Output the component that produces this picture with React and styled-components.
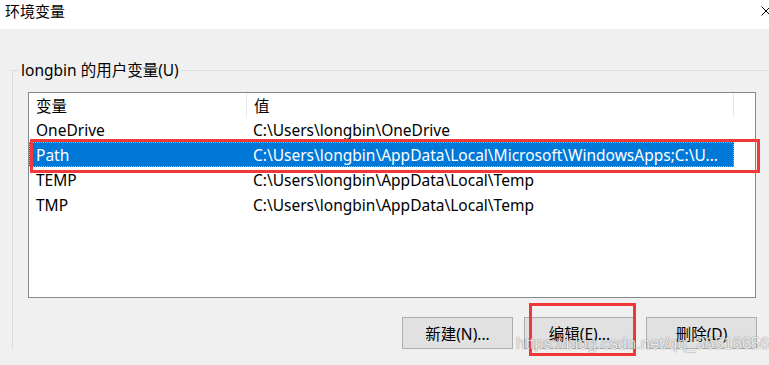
import React from 'react';
import styled, { createGlobalStyle } from 'styled-components';

const GlobalStyle = createGlobalStyle`
  html, body {
    margin: 0;
    padding: 0;
    background: #f0f0f0;
  }
  body {
    font-family: "Noto Sans", "Noto Sans CJK SC", sans-serif;
    color: #000;
  }
`;

const Window = styled.div`
  position: relative;
  width: 769px;
  height: 365px;
  overflow: hidden;
  background: #f0f0f0;
`;

const TitleBar = styled.div`
  height: 29px;
  background: #fff;
  display: flex;
  align-items: flex-start;
  justify-content: space-between;
  padding-left: 5px;
  box-sizing: border-box;
`;

const Title = styled.div`
  font-size: 15px;
  line-height: 20px;
  margin-top: 1px;
`;

const Close = styled.svg`
  width: 10px;
  height: 10px;
  margin-top: 6px;
  margin-right: -2px;
`;

const Group = styled.fieldset`
  margin: 31px 0 0 12px;
  width: 780px;
  padding: 12px 0 0 15px;
  border: 1px solid #dcdcdc;
  border-bottom: none;
  box-sizing: border-box;
  min-width: 0;
`;

const Legend = styled.legend`
  font-size: 15.5px;
  line-height: 20px;
  padding: 0 2px;
  margin-left: -9px;
`;

const List = styled.div`
  width: 728px;
  height: 206px;
  border: 1px solid #828790;
  background: #fff;
  box-sizing: border-box;
`;

const Row = styled.div`
  display: flex;
  height: ${p => (p.$header ? 24 : 25)}px;
  align-items: center;
  font-size: 15.5px;
  width: ${p => (p.$header ? 'auto' : '705px')};
  box-sizing: border-box;
  background: ${p => (p.$selected ? '#0078d7' : 'transparent')};
  color: ${p => (p.$selected ? '#fff' : '#000')};
  outline: ${p => (p.$selected ? '1px dotted #e8a36a' : 'none')};
  outline-offset: -1px;
`;

const Cell = styled.div`
  width: ${p => p.$w}px;
  height: 100%;
  display: flex;
  align-items: center;
  padding-left: 7px;
  box-sizing: border-box;
  white-space: nowrap;
  overflow: hidden;
  border-right: ${p => (p.$sep ? '1px solid #e5e5e5' : 'none')};
`;

const Buttons = styled.div`
  display: flex;
  justify-content: flex-end;
  gap: 11px;
  width: 729px;
  margin-top: 19px;
`;

const Button = styled.button`
  width: 111px;
  height: 32px;
  background: #e1e1e1;
  border: 1px solid #adadad;
  font-family: inherit;
  font-size: 15.5px;
  color: #000;
  padding: 0;
`;

const Mark = styled.div`
  position: absolute;
  left: ${p => p.$x}px;
  top: ${p => p.$y}px;
  width: ${p => p.$w}px;
  height: ${p => p.$h}px;
  border: 3px solid #f03838;
  box-sizing: border-box;
  pointer-events: none;
`;

const Watermark = styled.div`
  position: absolute;
  left: 516px;
  top: 334px;
  font-family: "Liberation Sans", sans-serif;
  font-size: 16.5px;
  color: rgba(255, 255, 255, 0.85);
  text-shadow: 0 0 1px rgba(0, 0, 0, 0.45), 0 0 2px rgba(0, 0, 0, 0.2);
  pointer-events: none;
`;

const rows = [
  { name: 'OneDrive', value: 'C:\\Users\\longbin\\OneDrive' },
  { name: 'Path', value: 'C:\\Users\\longbin\\AppData\\Local\\Microsoft\\WindowsApps;C:\\U...', selected: true },
  { name: 'TEMP', value: 'C:\\Users\\longbin\\AppData\\Local\\Temp' },
  { name: 'TMP', value: 'C:\\Users\\longbin\\AppData\\Local\\Temp' },
];

export default function App() {
  return (
    <Window>
      <GlobalStyle />
      <TitleBar>
        <Title>环境变量</Title>
        <Close viewBox="0 0 10 10">
          <path d="M0.5 0.5 L9.5 9.5 M9.5 0.5 L0.5 9.5" stroke="#000" strokeWidth="1" fill="none" />
        </Close>
      </TitleBar>
      <Group>
        <Legend>longbin 的用户变量(U)</Legend>
        <List>
          <Row $header>
            <Cell $w={218} $sep>变量</Cell>
            <Cell $w={487} $sep>值</Cell>
          </Row>
          {rows.map(r => (
            <Row key={r.name} $selected={r.selected}>
              <Cell $w={217}>{r.name}</Cell>
              <Cell $w={488}>{r.value}</Cell>
            </Row>
          ))}
        </List>
        <Buttons>
          <Button>新建(N)...</Button>
          <Button>编辑(E)...</Button>
          <Button>删除(D)</Button>
        </Buttons>
      </Group>
      <Mark $x={30} $y={139} $w={730} $h={34} />
      <Mark $x={529} $y={303} $w={107} $h={53} />
      <Watermark>https://blog.csdn.net/qq_36516656</Watermark>
    </Window>
  );
}
